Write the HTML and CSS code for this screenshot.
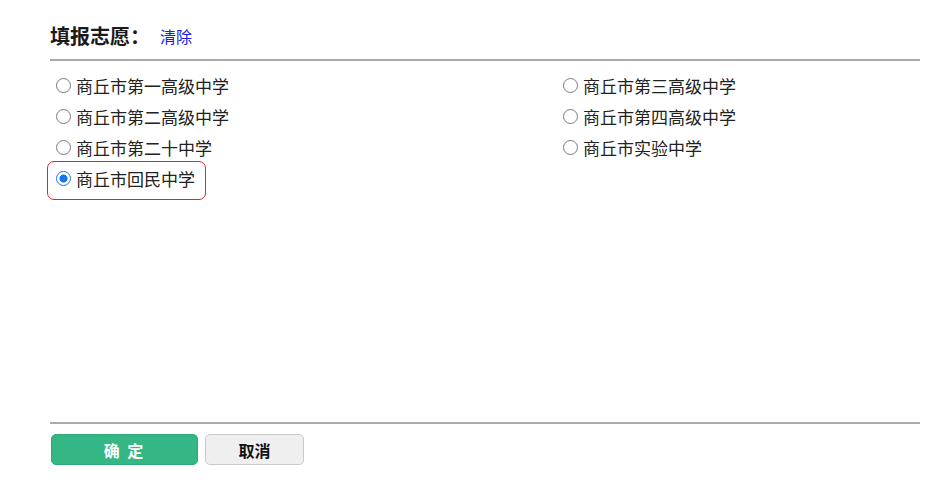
FILE: index.html
```html
<!DOCTYPE html>
<html lang="zh-CN">
<head>
<meta charset="utf-8">
<title>填报志愿</title>
<link rel="stylesheet" href="styles.css">
</head>
<body>
<div class="page">
  <div class="header">
    <h2 class="title">填报志愿：</h2>
    <a class="clear" href="#">清除</a>
  </div>
  <div class="options">
    <label class="opt"><input type="radio" name="school"><span>商丘市第一高级中学</span></label>
    <label class="opt"><input type="radio" name="school"><span>商丘市第三高级中学</span></label>
    <label class="opt"><input type="radio" name="school"><span>商丘市第二高级中学</span></label>
    <label class="opt"><input type="radio" name="school"><span>商丘市第四高级中学</span></label>
    <label class="opt"><input type="radio" name="school"><span>商丘市第二十中学</span></label>
    <label class="opt"><input type="radio" name="school"><span>商丘市实验中学</span></label>
    <label class="opt selected"><input type="radio" name="school" checked><span>商丘市回民中学</span></label>
  </div>
  <div class="footer">
    <button class="btn ok">确 定</button>
    <button class="btn cancel">取消</button>
  </div>
</div>
</body>
</html>
```
FILE: styles.css
```css
* { box-sizing: border-box; }
body {
  margin: 0;
  background: #fff;
  font-family: "Noto Sans CJK SC", "Noto Sans", sans-serif;
  color: #222;
}
.page {
  padding: 0 7px 0 50px;
}
.header {
  display: flex;
  align-items: center;
  gap: 10px;
  height: 61px;
  padding-top: 12px;
  border-bottom: 2px solid #ababab;
}
.title {
  margin: 0;
  font-size: 20px;
  font-weight: bold;
  color: #1a1a1a;
  line-height: 30px;
}
.clear {
  font-size: 16px;
  color: #1a1ae6;
  text-decoration: none;
  line-height: 30px;
}
.options {
  height: 363px;
  padding-top: 9px;
  display: grid;
  grid-template-columns: 507px 1fr;
  grid-auto-rows: 31px;
  align-content: start;
  border-bottom: 2px solid #ababab;
}
.opt {
  display: flex;
  align-items: center;
  font-size: 17px;
  color: #222;
  width: fit-content;
  position: relative;
  white-space: nowrap;
}
.opt input {
  appearance: none;
  -webkit-appearance: none;
  width: 15px;
  height: 15px;
  margin: 0 5px 0 6px;
  border: 1px solid #7a7a7a;
  border-radius: 50%;
  background: #fff;
  flex: none;
}
.opt input:checked {
  border: 1.5px solid #1a73f0;
  background: radial-gradient(circle, #1a73f0 0 3.8px, #fff 4.3px);
}
.opt.selected {
  grid-column: 1;
}
.opt.selected::before {
  content: "";
  position: absolute;
  left: -3px;
  right: -11px;
  top: -2px;
  bottom: -6px;
  border: 1px solid #e0262c;
  border-radius: 7px;
}
.footer {
  display: flex;
  gap: 7px;
  padding: 10px 0 0 1px;
}
.btn {
  height: 31px;
  border-radius: 5px;
  font-family: "Noto Sans CJK SC", "Noto Sans", sans-serif;
  font-size: 16px;
  font-weight: bold;
  cursor: pointer;
}
.ok {
  width: 147px;
  background: #35b685;
  border: 1px solid #2fa877;
  color: #fff;
  letter-spacing: 2px;
}
.cancel {
  width: 99px;
  background: #efefef;
  border: 1px solid #c9c9c9;
  color: #111;
}
```
